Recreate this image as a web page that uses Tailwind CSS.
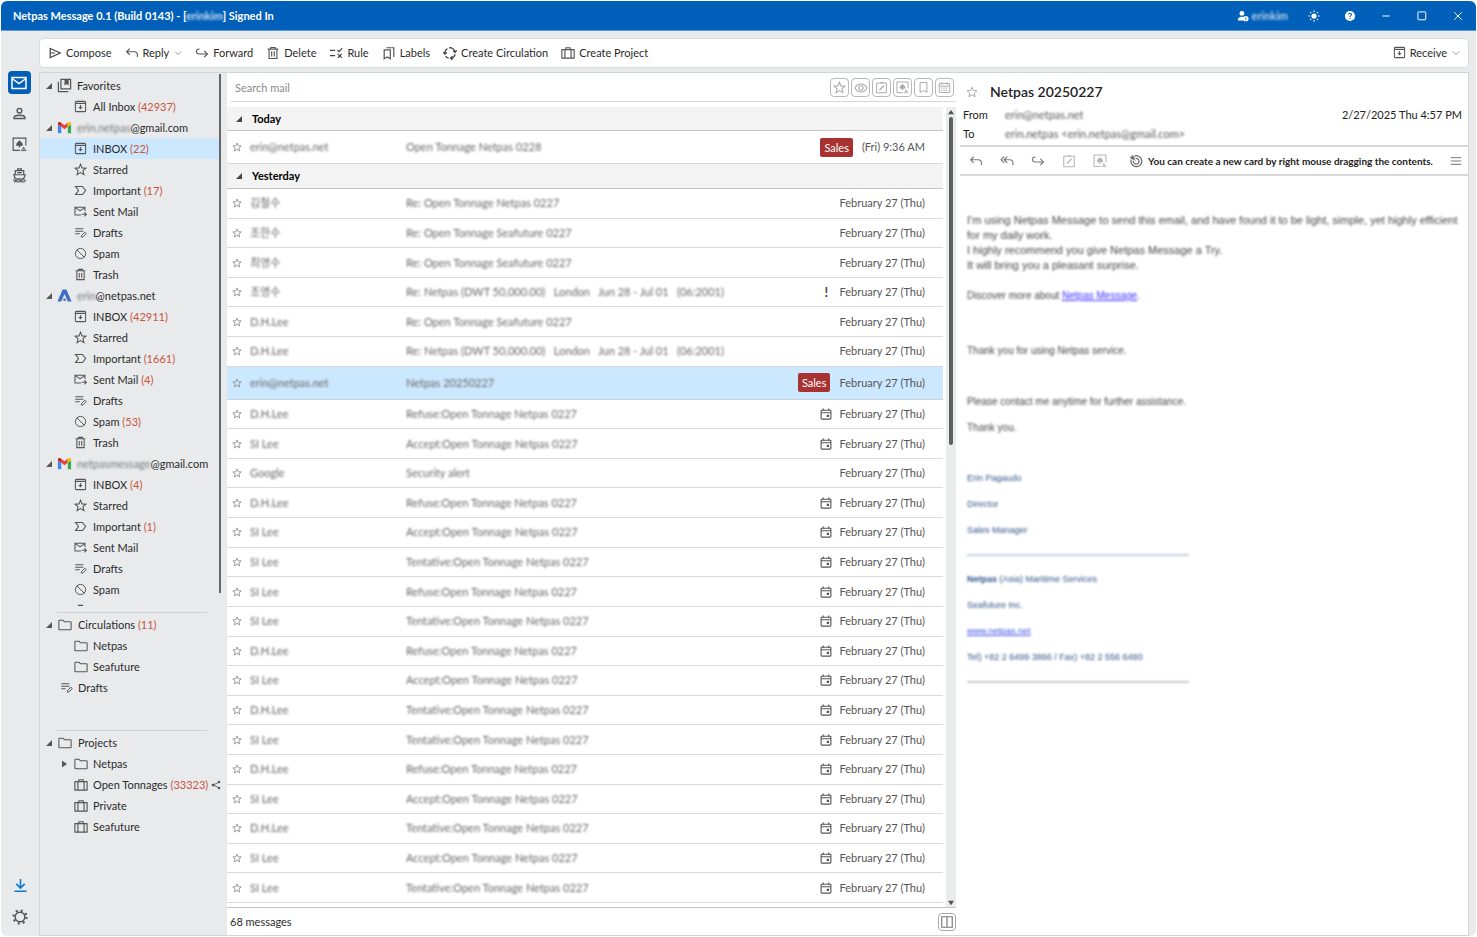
<!DOCTYPE html>
<html lang="en">
<head>
<meta charset="utf-8">
<title>Netpas Message</title>
<script src="https://cdn.jsdelivr.net/npm/@tailwindcss/browser@4"></script>
</head>
<body class="bg-white font-['Lato','Open_Sans','Noto_Sans_CJK_KR',sans-serif] text-[11px] leading-4 text-[#2b2b2b]">
<svg class="hidden" xmlns="http://www.w3.org/2000/svg">
  <defs>
    <symbol id="send" viewBox="0 0 16 16"><path d="M2.500 2.800 14 8 2.500 13.200V2.800ZM3 8h5" fill="none" stroke="currentColor" stroke-width="1.400"/></symbol>
    <symbol id="reply" viewBox="0 0 16 16"><path d="M5.500 3 1.800 6.600l3.700 3.600M2 6.600h8.500c2.500 0 3.700 1.200 3.700 3.700v2.200" fill="none" stroke="currentColor" stroke-width="1.300"/></symbol>
    <symbol id="replyall" viewBox="0 0 16 16"><path d="M4.800 3 1.200 6.600l3.600 3.600M8.300 3 4.700 6.600l3.600 3.600M5 6.600h6.300c2.300 0 3.500 1.200 3.500 3.700v2.200" fill="none" stroke="currentColor" stroke-width="1.300"/></symbol>
    <symbol id="forward" viewBox="0 0 16 16"><path d="m10.500 5.500 3.700 3.600-3.700 3.600M14 9.100H5C2.800 9.100 1.600 8.200 1.600 6.300S2.800 3.500 5 3.500" fill="none" stroke="currentColor" stroke-width="1.300"/></symbol>
    <symbol id="trash" viewBox="0 0 16 16"><path d="M2 3.500h12M5.500 3.200V1.700h5v1.500M3.500 3.700v10.600h9V3.700M6.500 6v6M9.500 6v6" fill="none" stroke="currentColor" stroke-width="1.300"/></symbol>
    <symbol id="rule" viewBox="0 0 16 16"><path d="M1 5h6M1 11h6M9.500 4.500l2 2 3.500-4M10 9l4.500 4.500M14.500 9 10 13.500" fill="none" stroke="currentColor" stroke-width="1.400"/></symbol>
    <symbol id="labels" viewBox="0 0 16 16"><path d="M2.500 4.500v10L6 12.600l3.500 1.900v-10h-7ZM5 2h8.500v10.500" fill="none" stroke="currentColor" stroke-width="1.400"/></symbol>
    <symbol id="circ" viewBox="0 0 16 16"><path d="M2.200 9A6 6 0 0 1 5 3M7 2.100a6 6 0 0 1 6.800 4.600M13.900 9.500A6 6 0 0 1 9 14M6.500 13.900A6 6 0 0 1 3 11.500M.300 7 2.200 9.200 4.400 7.400M11.600 5.600l2.400 1.700L15.600 5M10.800 11.800 8.600 14l2.200 1.800" fill="none" stroke="currentColor" stroke-width="1.500"/></symbol>
    <symbol id="case" viewBox="0 0 16 16"><path d="M1 4.200h14v9.600H1zM5.500 4V2h5v2M4.500 4.200v9.600M11.500 4.200v9.600" fill="none" stroke="currentColor" stroke-width="1.300" stroke-linejoin="round"/></symbol>
    <symbol id="inbox" viewBox="0 0 16 16"><rect x="1.700" y="1.700" width="12.600" height="12.600" rx="1.200" fill="none" stroke="currentColor" stroke-width="1.300"/><path d="M1.700 4.200h12.600" stroke="currentColor" stroke-width="1.500"/><path d="M7.300 6.200h1.400v2.300h2L8 11.700 5.300 8.500h2z" fill="currentColor"/></symbol>
    <symbol id="chev" viewBox="0 0 16 16"><path d="m2 5 6 6 6-6" fill="none" stroke="currentColor" stroke-width="1.700"/></symbol>
    <symbol id="star" viewBox="0 0 16 16"><path d="m8 1.500 1.800 4.500 4.900.300-3.700 3.200 1.200 4.800L8 11.700l-4.200 2.600L5 9.500 1.300 6.300 6.200 6z" fill="none" stroke="currentColor" stroke-width="1.300"/></symbol>
    <symbol id="important" viewBox="0 0 16 16"><path d="M1.800 3h8.600l4 5-4 5H1.800l3.800-5z" fill="none" stroke="currentColor" stroke-width="1.300"/></symbol>
    <symbol id="sent" viewBox="0 0 16 16"><path d="M8.500 12.300H1.200V2.700h12.300v5M1.200 3.200l6.200 3.700 6.100-3.700M9.500 11.500H15M12.800 9l2.500 2.500-2.500 2.500" fill="none" stroke="currentColor" stroke-width="1.300"/></symbol>
    <symbol id="drafts" viewBox="0 0 16 16"><path d="M1.500 3.500h10M1.500 6.500h10M1.500 9.500H7" stroke="currentColor" stroke-width="1.300"/><path d="m9 13.800.300-2.200 4-4 1.800 1.800-4 4z" fill="none" stroke="currentColor" stroke-width="1.200"/></symbol>
    <symbol id="spam" viewBox="0 0 16 16"><circle cx="8" cy="8" r="6.300" fill="none" stroke="currentColor" stroke-width="1.200"/><path d="m3.500 3.500 9 9" stroke="currentColor" stroke-width="1.200"/></symbol>
    <symbol id="folder" viewBox="0 0 16 16"><path d="M1 3.200c0-.400.300-.700.700-.700h4l1.500 1.700h7.100c.400 0 .700.300.700.700v7.900c0 .400-.300.700-.700.700H1.700c-.400 0-.700-.300-.700-.700z" fill="none" stroke="currentColor" stroke-width="1.200"/></symbol>
    <symbol id="fav" viewBox="0 0 16 16"><path d="M4.200 1.500h10.300v10H4.200zM1.500 4v10.500H12" fill="none" stroke="currentColor" stroke-width="1.300"/><path d="M8 1.500h4.500V8l-2.200-1.600L8 8z" fill="currentColor"/></symbol>
    <symbol id="gmail" viewBox="0 0 16 14"><path d="M1 13V3.500l3.500 2.600V13z" fill="#4285f4"/><path d="M11.500 13V6.100L15 3.500V13z" fill="#34a853"/><path d="M4.500 2 8 4.700 11.500 2v4.100L8 8.800 4.500 6.100z" fill="#ea4335"/><path d="M1 3.500V2.600C1 1 2.800.500 4.500 2v4.100z" fill="#c5221f"/><path d="M15 3.500v-.900C15 1 13.200.500 11.500 2v4.100z" fill="#fbbc04"/></symbol>
    <symbol id="netpas" viewBox="0 0 16 14"><path d="M.500 13.300 6 .700h4l5.500 12.600h-4L8 5.500l-3.500 7.800z" fill="#3f6fc4"/><circle cx="8" cy="11.500" r="1.400" fill="#3f6fc4"/></symbol>
    <symbol id="share" viewBox="0 0 16 16"><path d="M12.500 3.500 3.500 8l9 4.500" fill="none" stroke="currentColor" stroke-width="1.400"/><circle cx="12.800" cy="3.200" r="2" fill="currentColor"/><circle cx="3.200" cy="8" r="2.200" fill="currentColor"/><circle cx="12.800" cy="12.800" r="2" fill="currentColor"/></symbol>
    <symbol id="open" viewBox="0 0 8 8"><path d="M7 1v6H1z" fill="currentColor"/></symbol>
    <symbol id="closed" viewBox="0 0 8 8"><path d="M2 .500 7 4 2 7.500z" fill="currentColor"/></symbol>
    <symbol id="mail" viewBox="0 0 16 16"><path d="M1 2.500h14v11H1zM1 3.500 8 8.600l7-5.100" fill="none" stroke="currentColor" stroke-width="1.500"/></symbol>
    <symbol id="person" viewBox="0 0 16 16"><circle cx="8" cy="5" r="2.500" fill="none" stroke="currentColor" stroke-width="1.500"/><path d="M2.200 13.300v-1c0-1.800 3.300-2.500 5.800-2.500s5.800.700 5.800 2.500v1z" fill="none" stroke="currentColor" stroke-width="1.500"/></symbol>
    <symbol id="card" viewBox="0 0 16 16"><path d="M8.500 14.300H1.200V1.200h13.600V9" fill="none" stroke="currentColor" stroke-width="1.200"/><path d="M8 3.500c1 1.600 3.500 2.600 3.500 4.500 0 1.700-1.900 2-2.900 1.100L9 11H7l.400-1.900C6.400 10 4.500 9.700 4.500 8c0-1.900 2.500-2.900 3.500-4.500z" fill="currentColor"/><path d="M10.200 14.500c0-1.200 1-1.700 2.300-1.700s2.300.500 2.300 1.700z" fill="none" stroke="currentColor" stroke-width="1"/><circle cx="12.500" cy="11.600" r="1" fill="currentColor"/></symbol>
    <symbol id="ship" viewBox="0 0 16 16"><path d="M6 2.500V1h4v1.500M3.500 6.800V2.900h9v3.900M2 7.200h12l-1.500 4.300h-9zM5.500 5h5" fill="none" stroke="currentColor" stroke-width="1.300"/><path d="M1 12.500c1.400 0 1.400.900 2.800.900s1.400-.900 2.800-.900 1.400.900 2.800.900 1.400-.900 2.800-.900 1.400.900 2.800.900M2 15c1.200 0 1.200-.700 2.400-.700s1.200.700 2.400.700 1.200-.700 2.400-.700 1.200.700 2.400.700 1.200-.700 2.400-.700" fill="none" stroke="currentColor" stroke-width="1.100"/></symbol>
    <symbol id="download" viewBox="0 0 16 16"><path d="M8 1v9.500M3.500 6.300 8 10.800l4.500-4.500M1.500 14.200h13" fill="none" stroke="currentColor" stroke-width="1.700"/></symbol>
    <symbol id="gear" viewBox="0 0 16 16"><circle cx="8" cy="8" r="4.800" fill="none" stroke="currentColor" stroke-width="1.500"/><circle cx="8" cy="8" r="6.500" fill="none" stroke="currentColor" stroke-width="2.200" stroke-dasharray="2 3.105"/></symbol>
    <symbol id="eye" viewBox="0 0 16 16"><path d="M1 8c1.600-3 4-4.500 7-4.500S13.400 5 15 8c-1.600 3-4 4.500-7 4.500S2.600 11 1 8z" fill="none" stroke="currentColor" stroke-width="1.200"/><circle cx="8" cy="8" r="2.500" fill="none" stroke="currentColor" stroke-width="1.200"/></symbol>
    <symbol id="note" viewBox="0 0 16 16"><path d="M2 2.500h12v12H2zM6 2h4" fill="none" stroke="currentColor" stroke-width="1.200"/><path d="m5.500 11 5.500-5.500" stroke="currentColor" stroke-width="1.600"/></symbol>
    <symbol id="bookmark" viewBox="0 0 16 16"><path d="M3.800 2h8.400v12L8 11.800 3.800 14z" fill="none" stroke="currentColor" stroke-width="1.200"/></symbol>
    <symbol id="calgrid" viewBox="0 0 16 16"><path d="M1.500 3.200h13v11h-13zM1.500 6.300h13M4.500 1.200v3M11.500 1.200v3" fill="none" stroke="currentColor" stroke-width="1.200"/><path d="M4 8.800h8.500M4 11.500h8.500" stroke="currentColor" stroke-width="1.500" stroke-dasharray="1.500 1.300"/></symbol>
    <symbol id="cal" viewBox="0 0 16 16"><rect x="1.500" y="3" width="13" height="11.800" rx="1" fill="none" stroke="currentColor" stroke-width="1.500"/><path d="M1.500 6.300h13M4.300.800v2.500M11.700.800v2.500" stroke="currentColor" stroke-width="1.500"/><path d="M9 9h3v3H9z" fill="currentColor"/></symbol>
    <symbol id="target" viewBox="0 0 16 16"><path d="M6 2.400A6.300 6.300 0 1 1 2.300 6.500M7.500 5.100a3.300 3.300 0 1 1-2.600 2.500" fill="none" stroke="currentColor" stroke-width="1.400"/><path d="M.500 3 3 3.300 3 .800l3 2.700.300 2.200 2.200 2.800-2.900-1.900-2.400-.500z" fill="currentColor"/></symbol>
    <symbol id="menu" viewBox="0 0 16 16"><path d="M1 3.500h14M1 8h14M1 12.500h14" stroke="currentColor" stroke-width="1.300"/></symbol>
    <symbol id="user" viewBox="0 0 16 16"><circle cx="6.500" cy="4.500" r="3.200" fill="currentColor"/><path d="M1 14c0-3.500 2-5 5.500-5 1 0 1.800.100 2.500.400V14z" fill="currentColor"/><circle cx="11.800" cy="11.500" r="3.600" fill="currentColor"/><path d="M11.800 9.300v1M11.800 11v2.600" stroke="#005fb8" stroke-width="1.200"/></symbol>
    <symbol id="sun" viewBox="0 0 16 16"><circle cx="8" cy="8" r="3.500" fill="currentColor"/><path d="M8 .500v2.200M8 13.300v2.200M.500 8h2.200M13.300 8h2.200M2.700 2.700l1.600 1.600M11.700 11.700l1.600 1.600M13.300 2.700l-1.600 1.600M4.300 11.700l-1.600 1.600" stroke="currentColor" stroke-width="1.500"/></symbol>
    <symbol id="help" viewBox="0 0 16 16"><circle cx="8" cy="8" r="6.800" fill="currentColor"/><path d="M6 6.200c.100-1.300.900-1.900 2-1.900 1.200 0 2 .700 2 1.700 0 1.500-2 1.500-2 3.200M8 10.300v1.600" fill="none" stroke="#005fb8" stroke-width="1.400"/></symbol>
    <symbol id="min" viewBox="0 0 16 16"><path d="M3 8h10" stroke="currentColor" stroke-width="1.300"/></symbol>
    <symbol id="max" viewBox="0 0 16 16"><rect x="2.500" y="2.500" width="10.500" height="10.500" rx="1" fill="none" stroke="currentColor" stroke-width="1.300"/></symbol>
    <symbol id="close" viewBox="0 0 16 16"><path d="m3 3 10 10M13 3 3 13" stroke="currentColor" stroke-width="1.300"/></symbol>
    <symbol id="split" viewBox="0 0 16 16"><path d="M2 2h12v12H2zM8 2v12" fill="none" stroke="currentColor" stroke-width="1.300"/></symbol>
  </defs>
</svg>

<div class="flex h-screen flex-col px-px pt-px pb-px">
  <header class="flex h-[30px] shrink-0 items-center rounded-t-md border-b border-[#5c9bd3] bg-[#005fb8] pl-3 pr-3 font-semibold text-white">
    <h1 class="flex-1 text-[11px] font-bold">Netpas Message 0.1 (Build 0143) - [<span class="blur-[1px] opacity-80">erinkim</span>] Signed In</h1>
    <button class="flex items-center gap-[3px]" aria-label="Account"><svg class="size-3"><use href="#user"/></svg><span class="text-[11px] blur-[1px] opacity-80">erinkim</span></button>
    <div class="flex items-center gap-6 pl-5">
      <button aria-label="Theme"><svg class="size-3"><use href="#sun"/></svg></button>
      <button aria-label="Help"><svg class="size-3"><use href="#help"/></svg></button>
      <button aria-label="Minimize"><svg class="size-3"><use href="#min"/></svg></button>
      <button aria-label="Maximize"><svg class="size-3"><use href="#max"/></svg></button>
      <button aria-label="Close"><svg class="size-3"><use href="#close"/></svg></button>
    </div>
  </header>

  <div class="flex min-h-0 flex-1 rounded-b-md bg-[#e9eaec] pr-[7px]">
    <nav class="flex w-[38px] shrink-0 flex-col items-center justify-between pt-10 pb-2 text-[#555]">
      <div class="flex flex-col gap-2 pr-[2px]">
        <button class="flex size-[23px] items-center justify-center rounded-sm bg-[#005fb8] text-white" aria-label="Mail"><svg class="size-4"><use href="#mail"/></svg></button>
        <button class="flex size-[23px] items-center justify-center" aria-label="Contacts"><svg class="size-[15px]"><use href="#person"/></svg></button>
        <button class="flex size-[23px] items-center justify-center" aria-label="Cards"><svg class="size-[15px]"><use href="#card"/></svg></button>
        <button class="flex size-[23px] items-center justify-center" aria-label="Vessels"><svg class="size-[15px]"><use href="#ship"/></svg></button>
      </div>
      <div class="flex flex-col gap-2">
        <button class="flex size-[23px] items-center justify-center text-[#0a78d4]" aria-label="Download"><svg class="size-[15px]"><use href="#download"/></svg></button>
        <button class="flex size-[23px] items-center justify-center" aria-label="Settings"><svg class="size-4"><use href="#gear"/></svg></button>
      </div>
    </nav>

    <div class="flex min-w-0 flex-1 flex-col gap-1 pt-[7px]">
      <div class="flex h-[30px] shrink-0 items-center gap-[13px] rounded-sm border border-[#d9dadc] bg-white px-2 pb-px text-[#2b2b2b]" role="toolbar">
        <button class="flex items-center gap-1"><svg class="size-[14px] text-[#444]"><use href="#send"/></svg>Compose</button>
        <button class="flex items-center gap-1"><svg class="size-[14px] text-[#555]"><use href="#reply"/></svg>Reply<svg class="ml-px size-2 text-[#888]"><use href="#chev"/></svg></button>
        <button class="flex items-center gap-1"><svg class="size-[14px] text-[#555]"><use href="#forward"/></svg>Forward</button>
        <button class="flex items-center gap-1"><svg class="size-[14px] text-[#555]"><use href="#trash"/></svg>Delete</button>
        <button class="flex items-center gap-1"><svg class="size-[14px] text-[#444]"><use href="#rule"/></svg>Rule</button>
        <button class="flex items-center gap-1"><svg class="size-[14px] text-[#555]"><use href="#labels"/></svg>Labels</button>
        <button class="flex items-center gap-1"><svg class="size-[14px] text-[#444]"><use href="#circ"/></svg>Create Circulation</button>
        <button class="flex items-center gap-1"><svg class="size-[14px] text-[#555]"><use href="#case"/></svg>Create Project</button>
        <button class="ml-auto flex items-center gap-1"><svg class="size-[13px] text-[#555]"><use href="#inbox"/></svg>Receive<svg class="ml-px size-2 text-[#888]"><use href="#chev"/></svg></button>
      </div>

      <div class="flex min-h-0 flex-1 border border-[#d4d5d7]">
        <aside class="flex w-[187px] shrink-0 flex-col">
          <div class="relative min-h-0 flex-1 overflow-hidden pt-[2px] pb-[6px]">
            <ul id="tree" class="h-full overflow-hidden"></ul>
            <div class="absolute top-px right-[6px] h-[519px] w-[2px] bg-[#666]"></div>
          </div>
          <ul id="circulations" class="mr-5 ml-[17px] min-h-[118px] shrink-0 border-t border-[#d0d1d3] pt-px"></ul>
          <ul id="projects" class="mr-5 ml-[17px] min-h-[205px] shrink-0 border-t border-[#d0d1d3] pt-px"></ul>
        </aside>

        <main class="flex w-[729px] shrink-0 flex-col bg-white">
          <div class="ml-1 flex h-[29px] shrink-0 items-center gap-[2px] border-b border-[#d6d7d9] pl-1 pr-[2px] pt-px text-[#aaa]">
            <input type="search" aria-label="Search mail" placeholder="Search mail" class="min-w-0 flex-1 outline-none placeholder:text-[#8a8a8a]">
            <button class="flex size-[19px] items-center justify-center rounded-sm border border-[#b8b8b8]" aria-label="Starred"><svg class="size-[13px]"><use href="#star"/></svg></button>
            <button class="flex size-[19px] items-center justify-center rounded-sm border border-[#b8b8b8]" aria-label="Unread"><svg class="size-[14px]"><use href="#eye"/></svg></button>
            <button class="flex size-[19px] items-center justify-center rounded-sm border border-[#b8b8b8]" aria-label="Notes"><svg class="size-[13px]"><use href="#note"/></svg></button>
            <button class="flex size-[19px] items-center justify-center rounded-sm border border-[#b8b8b8]" aria-label="Cards"><svg class="size-[13px]"><use href="#card"/></svg></button>
            <button class="flex size-[19px] items-center justify-center rounded-sm border border-[#b8b8b8]" aria-label="Bookmarks"><svg class="size-[13px]"><use href="#bookmark"/></svg></button>
            <button class="flex size-[19px] items-center justify-center rounded-sm border border-[#b8b8b8]" aria-label="Calendar"><svg class="size-[13px]"><use href="#calgrid"/></svg></button>
          </div>
          <div class="flex min-h-0 flex-1 gap-[3px] border-b border-[#c4c4c4] pt-[5px]">
            <div class="flex min-w-0 flex-1 flex-col pb-1">
              <h2 class="flex h-6 shrink-0 items-center gap-[9px] border-b border-[#c4c4c4] bg-[#f3f3f3] pl-2 font-bold text-black"><svg class="size-2 text-[#444]"><use href="#open"/></svg>Today</h2>
              <ul id="today"></ul>
              <h2 class="flex h-[25px] shrink-0 items-center gap-[9px] border-b border-[#c4c4c4] bg-[#f3f3f3] pl-2 font-bold text-black"><svg class="size-2 text-[#444]"><use href="#open"/></svg>Yesterday</h2>
              <ul id="yesterday" class="flex min-h-0 flex-1 flex-col"></ul>
            </div>
            <div class="flex w-[10px] shrink-0 flex-col items-center bg-[#ebecee] pt-[2px] pb-px text-[#555]">
              <svg class="h-[7px] w-2 -rotate-90"><use href="#closed"/></svg>
              <div class="mt-px h-[328px] w-1 rounded-full bg-[#606060]"></div>
              <svg class="mt-auto h-[7px] w-2 rotate-90"><use href="#closed"/></svg>
            </div>
          </div>
          <div class="flex h-[27px] shrink-0 items-center justify-between pl-[3px]">
            <span>68 messages</span>
            <button class="flex size-[18px] items-center justify-center rounded-sm border border-[#aaa] text-[#777]" aria-label="Split view"><svg class="size-[14px]"><use href="#split"/></svg></button>
          </div>
        </main>

        <article class="flex min-w-0 flex-1 flex-col bg-white pl-1">
          <div class="flex h-[34px] shrink-0 items-center gap-3 pl-[6px] pt-1">
            <button class="text-[#aaa]" aria-label="Star"><svg class="size-3"><use href="#star"/></svg></button>
            <h2 class="text-[14px] font-semibold text-[#222]">Netpas 20250227</h2>
          </div>
          <dl class="grid shrink-0 grid-cols-[42px_1fr_auto] gap-y-[3px] border-b-2 border-[#d8d8d8] pb-[3px] pl-[3px] pr-[6px] text-[#222]">
            <dt>From</dt><dd class="text-[#555] blur-[1px]">erin@netpas.net</dd><dd>2/27/2025 Thu 4:57 PM</dd>
            <dt>To</dt><dd class="col-span-2 text-[#555] blur-[1px]">erin.netpas &lt;erin.netpas@gmail.com&gt;</dd>
          </dl>
          <div class="flex h-[29px] shrink-0 items-center gap-[17px] border-b-2 border-[#d8d8d8] pl-[9px] pr-[6px] text-[#777]">
            <button aria-label="Reply"><svg class="size-[14px]"><use href="#reply"/></svg></button>
            <button aria-label="Reply all"><svg class="size-[14px]"><use href="#replyall"/></svg></button>
            <button aria-label="Forward"><svg class="size-[14px]"><use href="#forward"/></svg></button>
            <button class="text-[#b5b5b5]" aria-label="Note"><svg class="size-[14px]"><use href="#note"/></svg></button>
            <button class="text-[#b5b5b5]" aria-label="Card"><svg class="size-[14px]"><use href="#card"/></svg></button>
            <p class="ml-auto flex items-center gap-[5px] whitespace-nowrap text-[10px] font-bold text-[#222]"><svg class="size-[14px] text-[#666]"><use href="#target"/></svg>You can create a new card by right mouse dragging the contents.</p>
            <button aria-label="Menu"><svg class="size-3"><use href="#menu"/></svg></button>
          </div>
          <div class="min-h-0 flex-1 overflow-hidden px-[7px] pt-[37px] font-['Liberation_Sans',sans-serif] leading-[15px] text-[#444]">
            <div class="blur-[1px]">
              <p>I'm using Netpas Message to send this email, and have found it to be light, simple, yet highly efficient<br>for my daily work.<br>I highly recommend you give Netpas Message a Try.<br>It will bring you a pleasant surprise.</p>
              <div class="text-[10px] leading-[15px]">
                <p class="mt-[15px]">Discover more about <a href="#" class="text-[#3a2cff] underline">Netpas Message</a>.</p>
                <p class="mt-10">Thank you for using Netpas service.</p>
                <p class="mt-9">Please contact me anytime for further assistance.</p>
                <p class="mt-[11px]">Thank you.</p>
              </div>
              <div class="mt-9 flex flex-col gap-[11px] text-[9px] leading-[15px] text-[#2f5488]">
                <p>Erin Pagaudo</p>
                <p>Director</p>
                <p>Sales Manager</p>
                <hr class="my-[5px] w-[222px] border-t-2 border-[#c3d0de]">
                <p class="font-bold">Netpas <span class="font-normal">(Asia) Maritime Services</span></p>
                <p>Seafuture Inc.</p>
                <p><a href="#" class="text-[#3b50e0] underline">www.netpas.net</a></p>
                <p>Tel) +82 2 6499 3866 / Fax) +82 2 556 6480</p>
                <hr class="my-[5px] w-[222px] border-t-2 border-[#c8c8c8]">
              </div>
            </div>
          </div>
        </article>
      </div>
    </div>
  </div>
</div>

<script>
  const icon = (name, cls) => `<svg class="${cls}"><use href="#${name}"/></svg>`;
  const count = n => n ? ` <span class="text-[#c8553d]">(${n})</span>` : '';
  const group = (ic, label, n) => `<li class="flex h-[21px] items-center pl-[5px]">${icon('open', 'size-2 shrink-0 text-[#555]')}${icon(ic, 'ml-[4px] mr-[5px] size-[15px] shrink-0 text-[#555]')}<span class="whitespace-pre">${label}${count(n)}</span></li>`;
  const item = (ic, label, n, sel) => `<li class="${sel ? 'mr-[6px] flex h-[21px] items-center bg-[#cce8ff] pl-[34px]' : 'flex h-[21px] items-center pl-[34px]'}">${icon(ic, 'mr-[6px] size-[13px] shrink-0 text-[#555]')}<span class="whitespace-pre">${label}${count(n)}</span></li>`;
  const box = (inbox, imp, sent, spam, sel) => item('inbox', 'INBOX', inbox, sel) + item('star', 'Starred') + item('important', 'Important', imp) +
    item('sent', 'Sent Mail', sent) + item('drafts', 'Drafts') + item('spam', 'Spam', spam) + item('trash', 'Trash');
  const hid = s => `<span class="inline-block text-[#777] blur-[1px]">${s}</span>`;
  document.getElementById('tree').innerHTML =
    group('fav', 'Favorites') + item('inbox', 'All Inbox', '42937') +
    group('gmail', hid('erin.netpas') + '@gmail.com') + box('22', '17', '', '', true) +
    group('netpas', hid('erin') + '@netpas.net') + box('42911', '1661', '4', '53') +
    group('gmail', hid('netpasmessage') + '@gmail.com') + box('4', '1', '', '');

  const head = (label, n) => `<li class="-ml-3 flex h-[21px] items-center whitespace-nowrap">${icon('open', 'size-2 shrink-0 text-[#555]')}${icon('folder', 'ml-[5px] mr-[6px] size-[14px] shrink-0 text-[#555]')}<span>${label}${count(n)}</span></li>`;
  const sub = (ic, label, n, arrow, share) => `<li class="flex h-[21px] items-center whitespace-nowrap pl-[3px]">${arrow ? icon('closed', 'mr-[6px] size-[8px] shrink-0 text-[#555]') : '<span class="w-[14px] shrink-0"></span>'}${icon(ic, 'mr-[5px] size-[14px] shrink-0 text-[#555]')}<span>${label}${count(n)}</span>${share ? icon('share', 'ml-[3px] size-[10px] shrink-0 text-[#555]') : ''}</li>`;
  document.getElementById('circulations').innerHTML =
    head('Circulations', '11') + sub('folder', 'Netpas') + sub('folder', 'Seafuture') +
    `<li class="flex h-[21px] items-center pl-[3px]">${icon('drafts', 'mr-[5px] size-[13px] text-[#555]')}Drafts</li>`;
  document.getElementById('projects').innerHTML =
    head('Projects') + sub('folder', 'Netpas', '', true) + sub('case', 'Open Tonnages', '33323', false, true) + sub('case', 'Private') + sub('case', 'Seafuture');

  const sales = '<span class="rounded-xs bg-[#a83232] px-1 leading-[19px] text-white">Sales</span>';
  const cal = icon('cal', 'size-3 text-[#555]');
  const bang = '<span class="w-3 text-center text-[13px] font-bold text-[#444]">!</span>';
  const row = (kind, who, subj, date, mark) => {
    const cls = {
      today: 'flex h-[33px] items-center border-b border-[#d8d8d8] pl-[5px] pr-[18px]',
      sel: 'flex h-[33px] shrink-0 items-center border-b border-[#c9d3db] bg-[#cce8ff] pl-[5px] pr-[18px]',
      row: 'flex min-h-0 flex-1 items-center border-b border-[#dadada] pl-[5px] pr-[18px]'
    }[kind];
    const gap = mark === sales ? 'gap-[9px]' : 'gap-[7px]';
    return `<li class="${cls}">${icon('star', 'mr-[8px] size-[10px] shrink-0 text-[#888]')}<span class="w-[156px] shrink-0 text-[#666] blur-[1px]">${who}</span><span class="flex-1 whitespace-pre text-[#666] blur-[1px]">${subj}</span><span class="flex items-center ${gap} text-[#555]">${mark || ''}<span>${date}</span></span></li>`;
  };
  document.getElementById('today').innerHTML = row('today', 'erin@netpas.net', 'Open Tonnage Netpas 0228', '(Fri) 9:36 AM', sales);
  const D = 'February 27 (Thu)';
  const long = 'Re: Netpas (DWT 50,000.00)   London   Jun 28 - Jul 01   (06:2001)';
  const A = 'Accept:Open Tonnage Netpas 0227', R = 'Refuse:Open Tonnage Netpas 0227', T = 'Tentative:Open Tonnage Netpas 0227';
  const rows = [
    ['김철수', 'Re: Open Tonnage Netpas 0227'], ['조한수', 'Re: Open Tonnage Seafuture 0227'],
    ['최영수', 'Re: Open Tonnage Seafuture 0227'], ['조영수', long, bang],
    ['D.H.Lee', 'Re: Open Tonnage Seafuture 0227'], ['D.H.Lee', long], ['erin@netpas.net', 'Netpas 20250227', sales],
    ['D.H.Lee', R, cal], ['SI Lee', A, cal], ['Google', 'Security alert'], ['D.H.Lee', R, cal], ['SI Lee', A, cal],
    ['SI Lee', T, cal], ['SI Lee', R, cal], ['SI Lee', T, cal], ['D.H.Lee', R, cal], ['SI Lee', A, cal], ['D.H.Lee', T, cal],
    ['SI Lee', T, cal], ['D.H.Lee', R, cal], ['SI Lee', A, cal], ['D.H.Lee', T, cal], ['SI Lee', A, cal], ['SI Lee', T, cal]
  ];
  document.getElementById('yesterday').innerHTML = rows.map(([w, s, m]) => row(m === sales ? 'sel' : 'row', w, s, D, m)).join('');
</script>
</body>
</html>
